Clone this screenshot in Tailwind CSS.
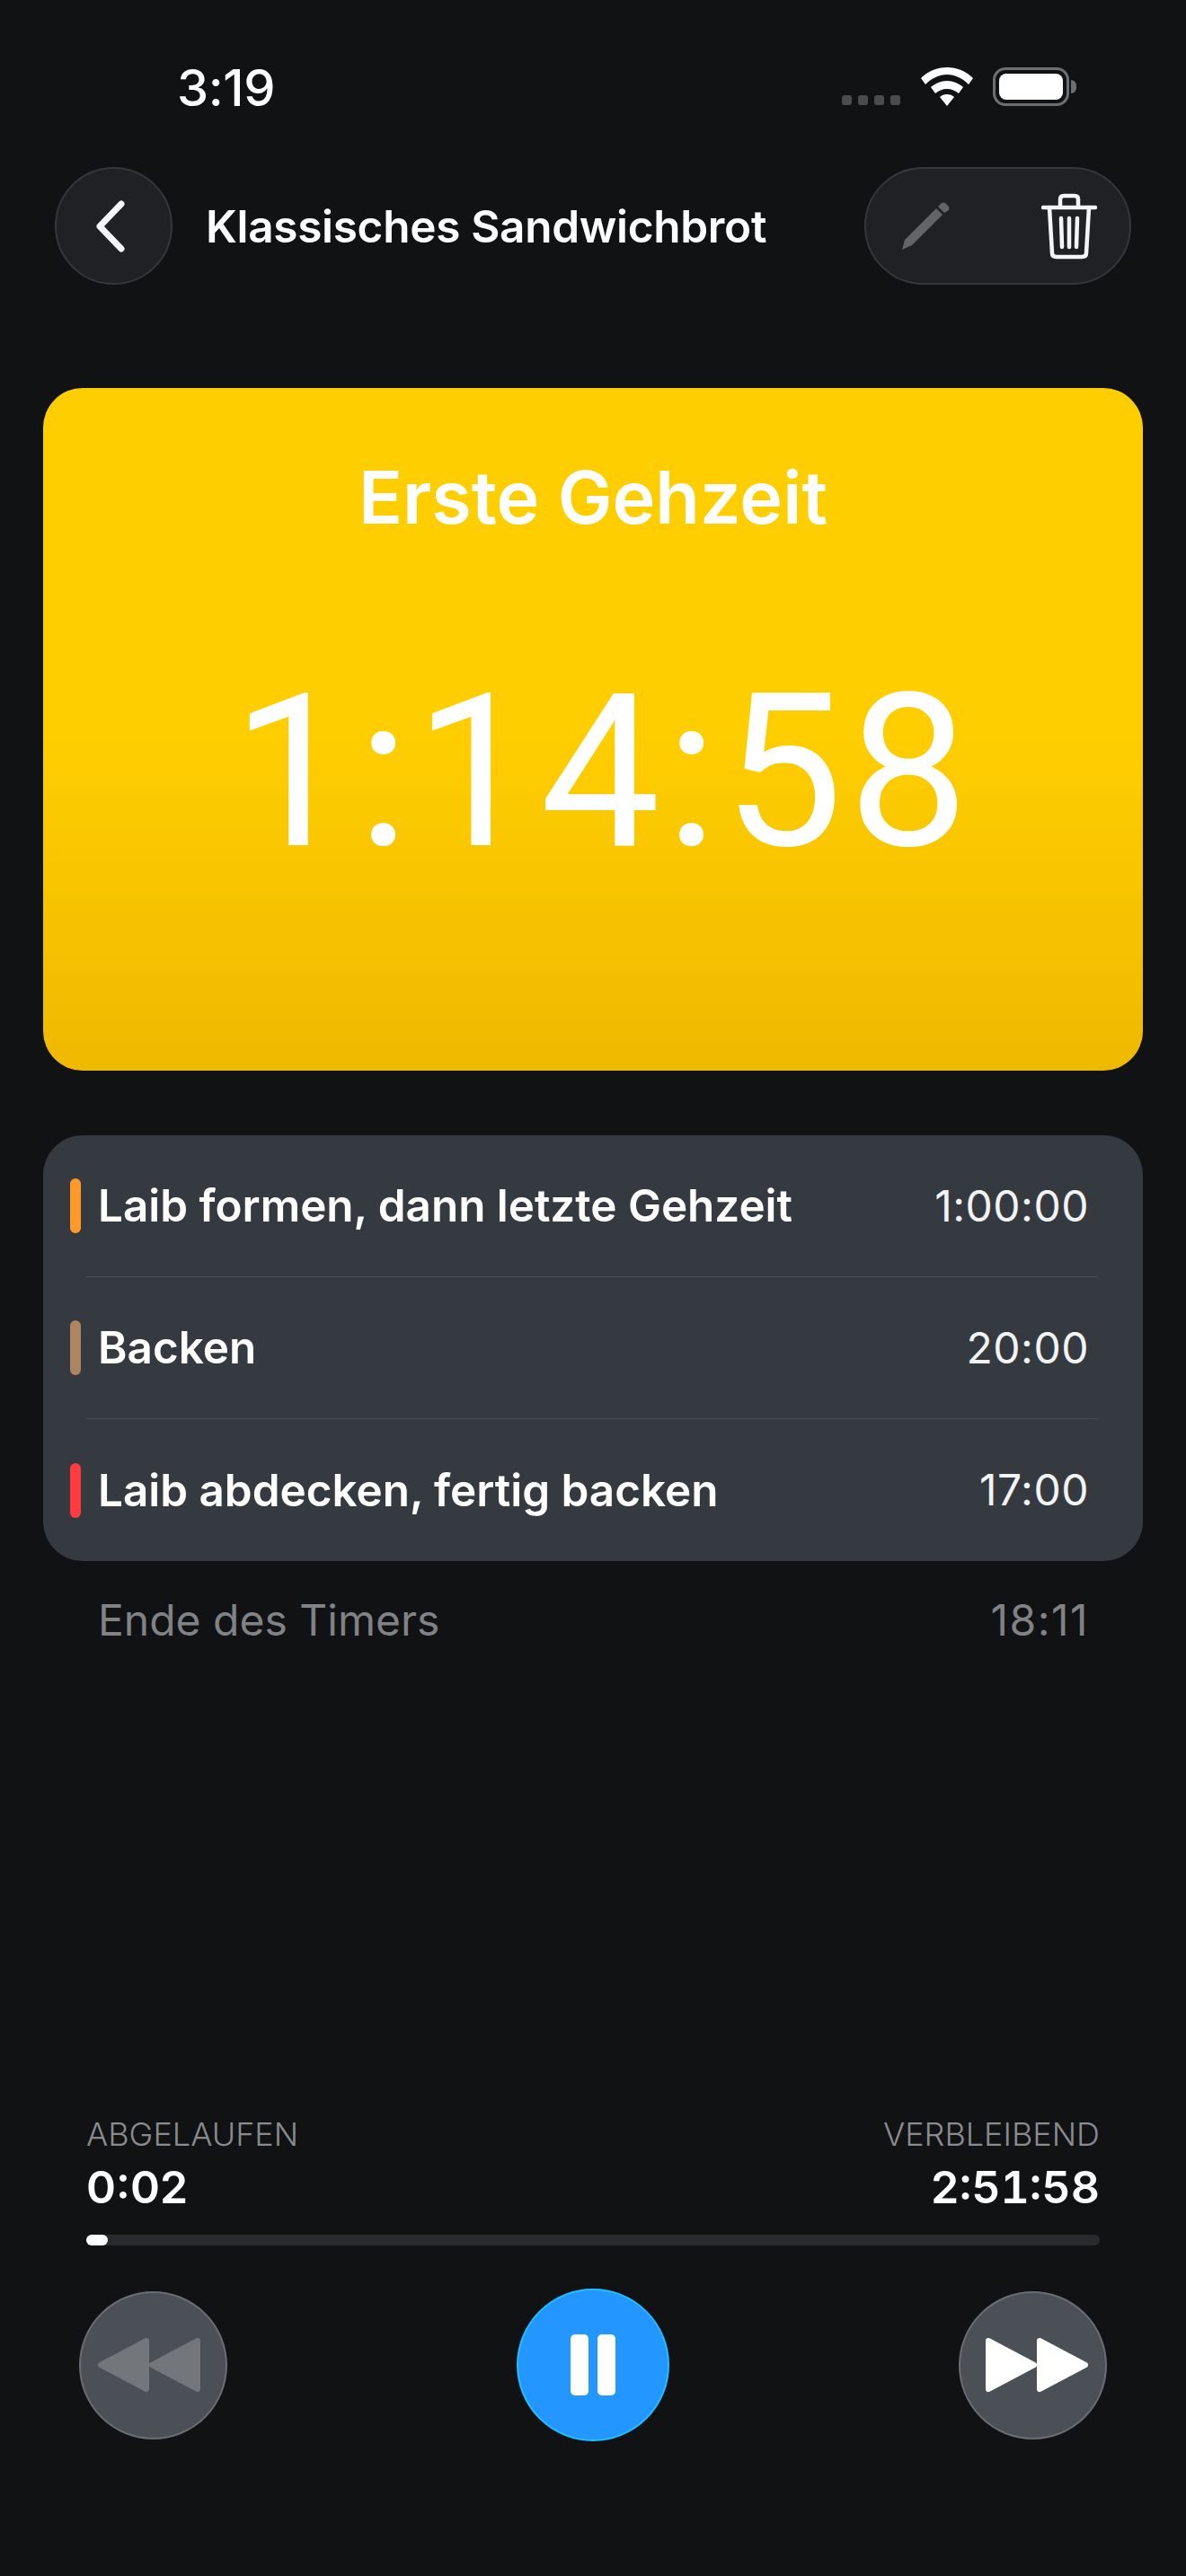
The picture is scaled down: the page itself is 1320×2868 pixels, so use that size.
<!DOCTYPE html>
<html lang="de">
<head>
  <meta charset="UTF-8">
  <meta name="viewport" content="width=device-width, initial-scale=1.0">
  <script src="https://cdn.jsdelivr.net/npm/@tailwindcss/browser@4"></script>
  <title>Klassisches Sandwichbrot</title>
</head>
<body class="bg-[#101214] text-white font-['Inter',sans-serif] w-[1320px] h-[2868px] overflow-hidden flex flex-col">
  <!-- Status bar -->
  <div class="h-[186px] pl-[197px] pr-[122px] pt-[68px] flex items-start justify-between shrink-0">
    <span class="text-[56px] leading-[60px] font-medium tracking-[-0.4px]">3:19</span>
    <div class="flex items-start pt-[7px]">
      <div class="flex gap-[7px] mt-[31px] mr-[23px]">
        <span class="w-[11px] h-[11px] rounded-[3px] bg-[#4a4b4d]"></span>
        <span class="w-[11px] h-[11px] rounded-[3px] bg-[#4a4b4d]"></span>
        <span class="w-[11px] h-[11px] rounded-[3px] bg-[#4a4b4d]"></span>
        <span class="w-[11px] h-[11px] rounded-[3px] bg-[#4a4b4d]"></span>
      </div>
      <svg class="w-[58px] h-[43px] mr-[22px]" viewBox="0 0 58 43" fill="white">
        <path d="M29 0C18 0 8 4 0 12l5 7C12 12 20 8 29 8s17 4 24 11l5-7C50 4 40 0 29 0z"/>
        <path d="M29 15c-7 0-13 3-18 7l5 7c3.500-3 8-5 13-5s9.500 2 13 5l5-7c-5-4-11-7-18-7z"/>
        <path d="M29 30c-3.500 0-6 1-8 3l8 10 8-10c-2-2-4.500-3-8-3z"/>
      </svg>
      <div class="flex items-center">
        <div class="w-[85px] h-[43px] rounded-[14px] border-[3px] border-[#6e6f71] p-[4px]">
          <div class="w-full h-full rounded-[8px] bg-white"></div>
        </div>
        <div class="w-[6px] h-[15px] ml-[2px] rounded-r-full bg-[#6e6f71]"></div>
      </div>
    </div>
  </div>

  <!-- Header -->
  <div class="h-[131px] pl-[61px] pr-[61px] flex items-center shrink-0">
    <div class="w-[131px] h-[131px] rounded-full bg-[#1f2124] border-[2px] border-[#35373a] flex items-center justify-center">
      <svg class="w-[40px] h-[60px] mr-[8px]" viewBox="0 0 40 60" fill="none" stroke="#f4f5f7" stroke-width="7" stroke-linecap="round" stroke-linejoin="round">
        <path d="M32 5 L8 30 L32 55"/>
      </svg>
    </div>
    <h1 class="ml-[37px] text-[49.500px] leading-[60px] font-semibold tracking-[-0.3px]">Klassisches Sandwichbrot</h1>
    <div class="ml-auto w-[297px] h-[131px] rounded-full bg-[#1f2124] border-[2px] border-[#35373a] flex items-center justify-between pl-[38px] pr-[36px]">
      <svg class="w-[56px] h-[56px]" viewBox="0 0 56 56">
        <path d="M2 54 L5 43 L40 8 L47 15 L13 49 Z" fill="#636466"/>
        <path d="M42 6 L46 2 Q48 1 50 2 L54 6 Q55 8 54 10 L49 13 Z" fill="#636466"/>
      </svg>
      <svg class="w-[62px] h-[74px]" viewBox="0 0 62 74" fill="none" stroke="#f4f5f7" stroke-width="4.500" stroke-linecap="round" stroke-linejoin="round">
        <path d="M2 16 H60"/>
        <path d="M21 15 V7 Q21 3 25 3 H37 Q41 3 41 7 V15"/>
        <path d="M9 16 L12 67 Q12 71 17 71 H45 Q50 71 50 67 L53 16"/>
        <path d="M22 28 L23 60"/>
        <path d="M31 28 V60"/>
        <path d="M40 28 L39 60"/>
      </svg>
    </div>
  </div>

  <!-- Current step -->
  <div class="mx-[48px] mt-[115px] h-[760px] rounded-[44px] bg-gradient-to-b from-[#ffce00] from-[50%] to-[#efb900] flex flex-col items-center shrink-0">
    <div class="mt-[77px] text-[81px] leading-[90px] font-semibold">Erste Gehzeit</div>
    <div class="mt-[121px] ml-[22px] font-['Roboto',sans-serif] text-[238px] leading-[280px] font-normal tracking-[6px]">1:14:58</div>
  </div>

  <!-- Upcoming steps -->
  <div class="mx-[48px] mt-[72px] h-[474px] rounded-[44px] bg-[#353a41] flex flex-col shrink-0">
    <div class="h-[158px] ml-[48px] mr-[50px] flex items-center border-b-[1px] border-[#474b52]">
      <span class="w-[12px] h-[61px] -ml-[18px] rounded-full bg-[#ff9a2a]"></span>
      <span class="ml-[19px] text-[49.400px] font-semibold">Laib formen, dann letzte Gehzeit</span>
      <span class="ml-auto mr-[10px] text-[48px] text-[#f2f3f4] tracking-[0.5px]">1:00:00</span>
    </div>
    <div class="h-[158px] ml-[48px] mr-[50px] flex items-center border-b-[1px] border-[#474b52]">
      <span class="w-[12px] h-[61px] -ml-[18px] rounded-full bg-[#ad8560]"></span>
      <span class="ml-[19px] text-[49.400px] font-semibold">Backen</span>
      <span class="ml-auto mr-[10px] text-[48px] text-[#f2f3f4] tracking-[0.5px]">20:00</span>
    </div>
    <div class="h-[158px] ml-[48px] mr-[50px] flex items-center">
      <span class="w-[12px] h-[61px] -ml-[18px] rounded-full bg-[#ff3b40]"></span>
      <span class="ml-[19px] text-[49.400px] font-semibold">Laib abdecken, fertig backen</span>
      <span class="ml-auto mr-[10px] text-[48px] text-[#f2f3f4] tracking-[0.5px]">17:00</span>
    </div>
  </div>
  <div class="mt-[30px] pl-[109px] pr-[108px] flex justify-between text-[48px] text-[#808285] shrink-0">
    <span>Ende des Timers</span>
    <span class="tracking-[1.500px]">18:11</span>
  </div>

  <!-- Transport -->
  <div class="mt-auto pb-[150px] px-[96px]">
    <div class="flex justify-between">
      <div>
        <div class="text-[36px] leading-[44px] font-light text-[#8a8b8e]">ABGELAUFEN</div>
        <div class="mt-[7px] text-[50px] leading-[60px] font-semibold">0:02</div>
      </div>
      <div class="text-right">
        <div class="text-[36px] leading-[44px] font-light text-[#8a8b8e]">VERBLEIBEND</div>
        <div class="mt-[7px] text-[50px] leading-[60px] font-semibold tabular-nums">2:51:58</div>
      </div>
    </div>
    <div class="mt-[23px] h-[12px] rounded-full bg-[#292a2e]">
      <div class="w-[24px] h-[12px] rounded-full bg-white"></div>
    </div>
    <div class="mt-[48px] -mx-[8px] flex items-center justify-between">
      <div class="w-[165px] h-[165px] rounded-full bg-[#4b4f56] border-[2px] border-[#6a6e74] flex items-center justify-center">
        <svg class="w-[114px] h-[64px] mr-[9px]" viewBox="0 0 114 64" fill="#73777c" stroke="#73777c" stroke-width="6" stroke-linejoin="round">
          <path d="M54 5 L3 32 L54 59 Z"/>
          <path d="M111 5 L60 32 L111 59 Z"/>
        </svg>
      </div>
      <div class="w-[170px] h-[170px] rounded-full bg-[#2496ff] border-[2px] border-[#1ec0ff] flex items-center justify-center gap-[10px]">
        <span class="w-[20px] h-[68px] rounded-[5px] bg-white"></span>
        <span class="w-[20px] h-[68px] rounded-[5px] bg-white"></span>
      </div>
      <div class="w-[165px] h-[165px] rounded-full bg-[#4b4f56] border-[2px] border-[#6a6e74] flex items-center justify-center">
        <svg class="w-[114px] h-[64px] ml-[8px]" viewBox="0 0 114 64" fill="#fff" stroke="#fff" stroke-width="6" stroke-linejoin="round">
          <path d="M3 5 L54 32 L3 59 Z"/>
          <path d="M60 5 L111 32 L60 59 Z"/>
        </svg>
      </div>
    </div>
  </div>
</body>
</html>
